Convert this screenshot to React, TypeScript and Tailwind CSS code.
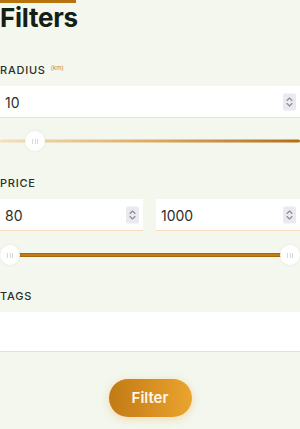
import React from "react";

function Spinner() {
  return (
    <div className="absolute right-[4px] top-1/2 -translate-y-1/2 flex h-[17px] w-[13px] items-center justify-center rounded-[2px] bg-[#e9e9ef]">
      <svg width="7" height="11" viewBox="0 0 7 11" fill="none" stroke="#8a8a96" strokeWidth="1.1" strokeLinecap="round" strokeLinejoin="round">
        <path d="M1 4 L3.5 1.5 L6 4" />
        <path d="M1 7 L3.5 9.5 L6 7" />
      </svg>
    </div>
  );
}

function NumberField({ value, className = "" }: { value: string; className?: string }) {
  return (
    <div className={`relative h-[32px] bg-white border-b-[1.5px] border-[#f7dcbc] ${className}`}>
      <span className="absolute left-[5px] top-1/2 -translate-y-1/2 text-[14px] text-[#2d2d2d]">{value}</span>
      <Spinner />
    </div>
  );
}

function Thumb({ left }: { left: string }) {
  return (
    <div
      className="absolute top-1/2 flex h-[20px] w-[20px] -translate-x-1/2 -translate-y-1/2 items-center justify-center gap-[1.5px] rounded-full bg-white shadow-[0_0_3px_rgba(0,0,0,0.08)]"
      style={{ left }}
    >
      <span className="h-[5px] w-[1px] bg-[#d8d8d8]" />
      <span className="h-[5px] w-[1px] bg-[#d8d8d8]" />
      <span className="h-[5px] w-[1px] bg-[#d8d8d8]" />
    </div>
  );
}

function Label({ children, className = "" }: { children: React.ReactNode; className?: string }) {
  return (
    <div className={`flex h-[12px] items-center gap-[5px] ${className}`}>
      {children}
    </div>
  );
}

function LabelText({ children }: { children: React.ReactNode }) {
  return <span className="text-[11px] font-medium uppercase tracking-[0.07em] text-[#2b302b] leading-none">{children}</span>;
}

export default function App() {
  return (
    <div className="h-[429px] w-[300px] overflow-hidden bg-[#f3f7ee]" style={{ fontFamily: "Inter, 'Noto Sans', sans-serif" }}>
      <div className="h-[3px] w-[76px] bg-[#b8730f]" />
      <h1 className="h-[30px] text-[26px] font-bold leading-[30px] tracking-[-0.01em] text-[#142014]">Filters</h1>

      <Label className="mt-[31px]">
        <LabelText>Radius</LabelText>
        <span className="-mt-[5px] text-[6px] leading-none text-[#c9892d]">(km)</span>
      </Label>
      <NumberField value="10" className="mt-[10px]" />
      <div className="relative mt-[9px] h-[28px]">
        <div className="absolute left-0 right-0 top-1/2 h-[3px] -translate-y-1/2 rounded-full bg-gradient-to-r from-[#f5dfbb] via-[#dcaa62] to-[#b46e10]" />
        <Thumb left="35px" />
      </div>

      <Label className="mt-[22px]">
        <LabelText>Price</LabelText>
      </Label>
      <div className="mt-[10px] flex gap-[13px]">
        <NumberField value="80" className="w-[143px]" />
        <NumberField value="1000" className="flex-1" />
      </div>
      <div className="relative mt-[10px] h-[28px]">
        <div className="absolute left-0 right-0 top-1/2 h-[3px] -translate-y-1/2 bg-[#f3dfbf]" />
        <div className="absolute left-[10px] right-[10px] top-1/2 h-[4px] -translate-y-1/2 bg-[#c07c1a] border-y border-[#a9680f]" />
        <Thumb left="10px" />
        <Thumb left="290px" />
      </div>

      <Label className="mt-[21px]">
        <LabelText>Tags</LabelText>
      </Label>
      <div className="mt-[10px] h-[40px] bg-white border-b-[1.5px] border-[#f7dcbc]" />

      <div className="mt-[27px] flex justify-center">
        <button className="h-[38px] w-[83px] rounded-full bg-gradient-to-r from-[#c27a14] to-[#eba42e] text-[15px] font-semibold text-[#fff7ea] shadow-[0_2px_8px_rgba(240,180,90,0.45)]">
          Filter
        </button>
      </div>
    </div>
  );
}
